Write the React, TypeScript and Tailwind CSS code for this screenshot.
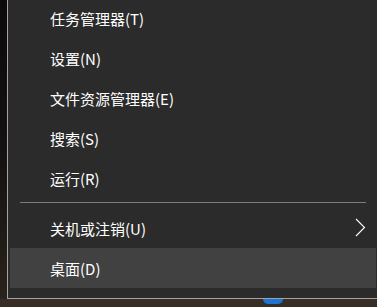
import React from 'react'

type Item = {
  label: string
  submenu?: boolean
  active?: boolean
}

const topItems: Item[] = [
  { label: '任务管理器(T)' },
  { label: '设置(N)' },
  { label: '文件资源管理器(E)' },
  { label: '搜索(S)' },
  { label: '运行(R)' },
]

const bottomItems: Item[] = [
  { label: '关机或注销(U)', submenu: true },
  { label: '桌面(D)', active: true },
]

const Row: React.FC<{ item: Item }> = ({ item }) => (
  <div
    className={`flex h-10 shrink-0 items-center justify-between pl-[40px] pr-[10px] text-[15px] leading-none text-white ${
      item.active ? 'bg-[#414141]' : ''
    }`}
  >
    <span>{item.label}</span>
    {item.submenu && (
      <svg width="11" height="19" viewBox="0 0 11 19" className="mt-[-2px]">
        <path d="M1 1 L9.5 9.5 L1 18" fill="none" stroke="#ffffff" strokeWidth="1.1" />
      </svg>
    )}
  </div>
)

export default function App() {
  return (
    <div
      className="flex h-[307px] w-[377px] flex-col overflow-hidden bg-[#392e25]"
      style={{ fontFamily: '"Noto Sans CJK SC", "Noto Sans", sans-serif' }}
    >
      <div className="flex h-[299px] shrink-0">
        <div className="w-[7px] shrink-0 bg-gradient-to-b from-[#0c0a0a] via-[#141211] to-[#2a221b]" />
        <div className="w-[372px] shrink-0 border-x border-b border-[#a3a3a3] bg-[#2b2b2b] px-[2px]">
          <div className="mt-[-2px] flex flex-col">
            {topItems.map(item => (
              <Row key={item.label} item={item} />
            ))}
            <div className="h-[10px] shrink-0 pt-[4px]">
              <div className="mx-[10px] h-px bg-[#7d7d7d]" />
            </div>
            {bottomItems.map(item => (
              <Row key={item.label} item={item} />
            ))}
          </div>
        </div>
      </div>
      <div className="flex h-[8px] shrink-0">
        <div className="ml-[263px] h-[5px] w-[20px] rounded-b-full bg-[#1c74d4]" />
      </div>
    </div>
  )
}
